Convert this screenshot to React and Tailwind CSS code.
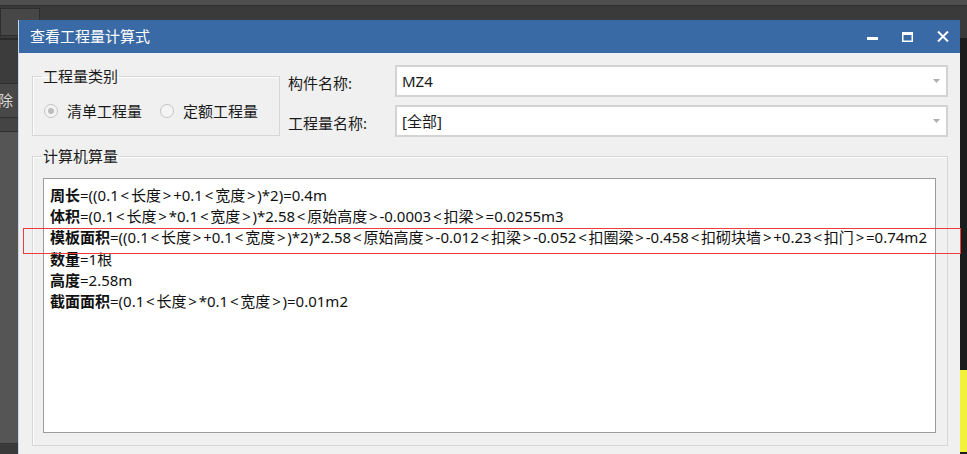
import React from "react";

const FONT = { fontFamily: '"Noto Sans", "Noto Sans CJK SC", sans-serif' };

function Radio({ checked }) {
  return (
    <span className="flex h-[14px] w-[14px] items-center justify-center rounded-full border border-[#c4c4c4] bg-[#f4f4f4]">
      {checked && <span className="h-[6px] w-[6px] rounded-full bg-[#bdbdbd]" />}
    </span>
  );
}

function Select({ value }) {
  return (
    <div className="flex h-[32px] w-[553px] items-center justify-between border-2 border-[#d3d3d3] bg-white pl-[5px] pr-[6px]">
      <span className="text-[15px] text-[#1a1a1a]">{value}</span>
      <svg width="7" height="4" viewBox="0 0 7 4">
        <path d="M0 0 H7 L3.5 4 Z" fill="#b0b0b0" />
      </svg>
    </div>
  );
}

const lines = [
  ["周长", "=((0.1<长度>+0.1<宽度>)*2)=0.4m"],
  ["体积", "=(0.1<长度>*0.1<宽度>)*2.58<原始高度>-0.0003<扣梁>=0.0255m3"],
  ["模板面积", "=((0.1<长度>+0.1<宽度>)*2)*2.58<原始高度>-0.012<扣梁>-0.052<扣圈梁>-0.458<扣砌块墙>+0.23<扣门>=0.74m2"],
  ["数量", "=1根"],
  ["高度", "=2.58m"],
  ["截面面积", "=(0.1<长度>*0.1<宽度>)=0.01m2"],
];

function Formula({ text }) {
  const parts = text.split(/([<>])/);
  return (
    <>
      {parts.map((p, i) =>
        p === "<" || p === ">" ? (
          <span key={i} className="mx-[1.8px]">{p}</span>
        ) : (
          <span key={i}>{p}</span>
        )
      )}
    </>
  );
}

export default function App() {
  return (
    <div className="relative h-[454px] w-[967px] overflow-hidden bg-[#3a3a3a]" style={FONT}>
      {/* app background */}
      <div className="flex h-full flex-col">
        <div className="h-[6px] border-b border-[#2e2e2e] bg-[#4f4f4f]" />
        <div className="flex h-[32px] items-start pt-[2px]">
          <div className="h-[28px] w-[40px] border border-[#2f2f2f] bg-[#474747]" />
        </div>
        <div className="flex flex-1">
          <div className="flex w-[18px] flex-col">
            <div className="h-[45px] border-t-2 border-[#2b2b2b] bg-[#3c3c3c]" />
            <div className="flex h-[35px] items-center overflow-hidden border-y border-[#2f2f2f] bg-[#484848] text-[15px] text-[#d8d8d8]">
              <span className="-ml-[2px]">除</span>
            </div>
            <div className="h-[14px] border-b border-[#2f2f2f] bg-[#444444]" />
            <div className="flex-1 bg-[#555555]" />
            <div className="h-[11px] border-t border-[#333333] bg-[#3a3a3a]" />
          </div>
          <div className="flex-1" />
          <div className="flex w-[7px] flex-col">
            <div className="h-[332px] bg-[#1c1c1c]" />
            <div className="h-[82px] bg-[#f2f23a]" />
            <div className="flex-1 bg-[#1c1c1c]" />
          </div>
        </div>
      </div>

      {/* dialog window */}
      <div className="absolute left-[18px] top-[20px] flex h-[440px] w-[942px] flex-col border-l border-[#c9d6ea] bg-[#f0f0f0]">
        <div className="flex h-[33px] items-center justify-between bg-[#3a6aa5] pl-[11px]">
          <span className="text-[15px] text-white">查看工程量计算式</span>
          <div className="flex">
            <div className="flex h-[33px] w-[35px] items-center justify-center">
              <svg width="11" height="11" viewBox="0 0 11 11">
                <rect x="0" y="6" width="11" height="3" fill="#fff" />
              </svg>
            </div>
            <div className="flex h-[33px] w-[35px] items-center justify-center">
              <svg width="11" height="10" viewBox="0 0 11 10">
                <rect x="0.75" y="1.5" width="9.5" height="7.75" fill="none" stroke="#fff" strokeWidth="1.5" />
                <rect x="0" y="0" width="11" height="3" fill="#fff" />
              </svg>
            </div>
            <div className="flex h-[33px] w-[35px] items-center justify-center">
              <svg width="12" height="11" viewBox="0 0 12 11">
                <path d="M1 0.5 L11 10.5 M11 0.5 L1 10.5" stroke="#fff" strokeWidth="2" />
              </svg>
            </div>
          </div>
        </div>

        <div className="flex flex-col pl-[13px]">
          {/* top row */}
          <div className="flex items-start pt-[12px]">
            <fieldset className="mt-[1px] h-[70px] w-[248px] border border-[#d6d6d6] shadow-[inset_1px_1px_0_#ffffff]">
              <legend className="ml-[9px] px-[1px] text-[15px] leading-[20px] text-[#1a1a1a]">工程量类别</legend>
              <div className="flex items-center pt-[15px] text-[15px] leading-[20px] text-[#1a1a1a]">
                <div className="ml-[11px] flex items-center">
                  <Radio checked />
                  <span className="ml-[9px]">清单工程量</span>
                </div>
                <div className="ml-[18px] flex items-center">
                  <Radio />
                  <span className="ml-[9px]">定额工程量</span>
                </div>
              </div>
            </fieldset>
            <div className="ml-[8px] flex flex-col gap-[8px]">
              <div className="flex items-center">
                <span className="w-[107px] pt-[4px] text-[15px] text-[#1a1a1a]">构件名称:</span>
                <Select value="MZ4" />
              </div>
              <div className="flex items-center">
                <span className="w-[107px] pt-[4px] text-[15px] text-[#1a1a1a]">工程量名称:</span>
                <Select value="[全部]" />
              </div>
            </div>
          </div>

          {/* computer quantity group */}
          <fieldset className="mt-[9px] h-[300px] w-[916px] border border-[#d6d6d6] px-[10px] shadow-[inset_1px_1px_0_#ffffff]">
            <legend className="ml-[-1px] px-[1px] text-[15px] leading-[20px] text-[#1a1a1a]">计算机算量</legend>
            <div className="mt-[12px] h-[255px] w-[893px] border border-[#9c9c9c] bg-white pl-[6px] pt-[6px] text-[15px] leading-[21.2px] text-[#111111]">
              {lines.map(([label, rest], i) => (
                <div key={i} className="whitespace-nowrap">
                  <span className="font-bold">{label}</span>
                  <Formula text={rest} />
                </div>
              ))}
            </div>
          </fieldset>
        </div>
      </div>

      {/* red highlight box */}
      <div className="absolute left-[23px] top-[228px] h-[26px] w-[938px] border border-[#ee3b3b]" />
    </div>
  );
}
